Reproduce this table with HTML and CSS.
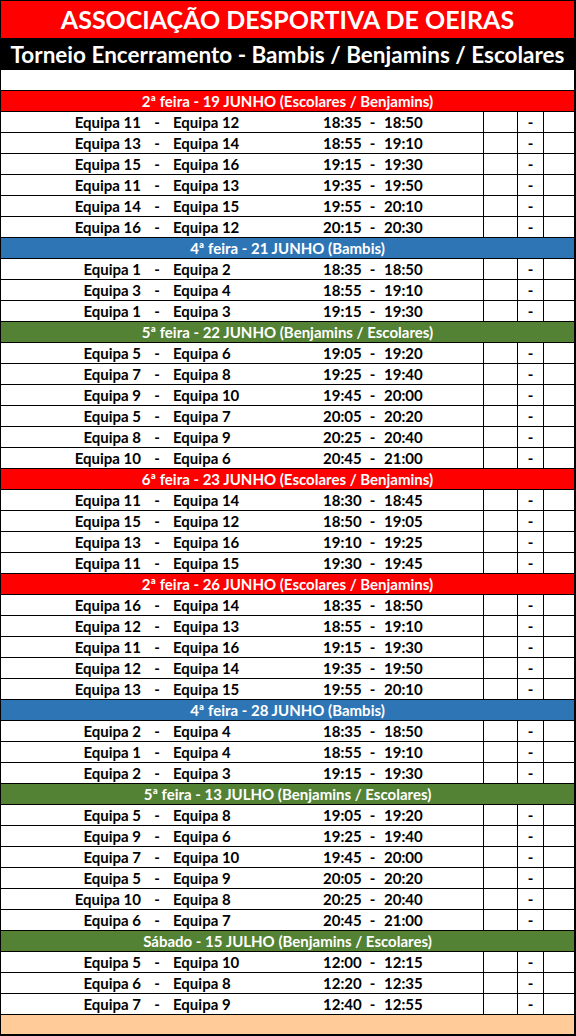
FILE: index.html
```html
<!DOCTYPE html>
<html lang="pt">
<head>
<meta charset="utf-8">
<title>Torneio Encerramento</title>
<link rel="stylesheet" href="styles.css">
</head>
<body>
<div class="sheet">
  <div class="title">ASSOCIAÇÃO DESPORTIVA DE OEIRAS</div>
  <div class="subtitle">Torneio Encerramento - Bambis / Benjamins / Escolares</div>
  <div class="blank"></div>

  <div class="day red">2ª feira - 19 JUNHO (Escolares / Benjamins)</div>
  <div class="match"><div class="game"><span class="t1">Equipa 11</span><span class="sep">-</span><span class="t2">Equipa 12</span><span class="h1">18:35</span><span class="sep2">-</span><span class="h2">18:50</span></div><div class="c"></div><div class="c">-</div><div class="c"></div></div>
  <div class="match"><div class="game"><span class="t1">Equipa 13</span><span class="sep">-</span><span class="t2">Equipa 14</span><span class="h1">18:55</span><span class="sep2">-</span><span class="h2">19:10</span></div><div class="c"></div><div class="c">-</div><div class="c"></div></div>
  <div class="match"><div class="game"><span class="t1">Equipa 15</span><span class="sep">-</span><span class="t2">Equipa 16</span><span class="h1">19:15</span><span class="sep2">-</span><span class="h2">19:30</span></div><div class="c"></div><div class="c">-</div><div class="c"></div></div>
  <div class="match"><div class="game"><span class="t1">Equipa 11</span><span class="sep">-</span><span class="t2">Equipa 13</span><span class="h1">19:35</span><span class="sep2">-</span><span class="h2">19:50</span></div><div class="c"></div><div class="c">-</div><div class="c"></div></div>
  <div class="match"><div class="game"><span class="t1">Equipa 14</span><span class="sep">-</span><span class="t2">Equipa 15</span><span class="h1">19:55</span><span class="sep2">-</span><span class="h2">20:10</span></div><div class="c"></div><div class="c">-</div><div class="c"></div></div>
  <div class="match"><div class="game"><span class="t1">Equipa 16</span><span class="sep">-</span><span class="t2">Equipa 12</span><span class="h1">20:15</span><span class="sep2">-</span><span class="h2">20:30</span></div><div class="c"></div><div class="c">-</div><div class="c"></div></div>

  <div class="day blue">4ª feira - 21 JUNHO (Bambis)</div>
  <div class="match"><div class="game"><span class="t1">Equipa 1</span><span class="sep">-</span><span class="t2">Equipa 2</span><span class="h1">18:35</span><span class="sep2">-</span><span class="h2">18:50</span></div><div class="c"></div><div class="c">-</div><div class="c"></div></div>
  <div class="match"><div class="game"><span class="t1">Equipa 3</span><span class="sep">-</span><span class="t2">Equipa 4</span><span class="h1">18:55</span><span class="sep2">-</span><span class="h2">19:10</span></div><div class="c"></div><div class="c">-</div><div class="c"></div></div>
  <div class="match"><div class="game"><span class="t1">Equipa 1</span><span class="sep">-</span><span class="t2">Equipa 3</span><span class="h1">19:15</span><span class="sep2">-</span><span class="h2">19:30</span></div><div class="c"></div><div class="c">-</div><div class="c"></div></div>

  <div class="day green">5ª feira - 22 JUNHO (Benjamins / Escolares)</div>
  <div class="match"><div class="game"><span class="t1">Equipa 5</span><span class="sep">-</span><span class="t2">Equipa 6</span><span class="h1">19:05</span><span class="sep2">-</span><span class="h2">19:20</span></div><div class="c"></div><div class="c">-</div><div class="c"></div></div>
  <div class="match"><div class="game"><span class="t1">Equipa 7</span><span class="sep">-</span><span class="t2">Equipa 8</span><span class="h1">19:25</span><span class="sep2">-</span><span class="h2">19:40</span></div><div class="c"></div><div class="c">-</div><div class="c"></div></div>
  <div class="match"><div class="game"><span class="t1">Equipa 9</span><span class="sep">-</span><span class="t2">Equipa 10</span><span class="h1">19:45</span><span class="sep2">-</span><span class="h2">20:00</span></div><div class="c"></div><div class="c">-</div><div class="c"></div></div>
  <div class="match"><div class="game"><span class="t1">Equipa 5</span><span class="sep">-</span><span class="t2">Equipa 7</span><span class="h1">20:05</span><span class="sep2">-</span><span class="h2">20:20</span></div><div class="c"></div><div class="c">-</div><div class="c"></div></div>
  <div class="match"><div class="game"><span class="t1">Equipa 8</span><span class="sep">-</span><span class="t2">Equipa 9</span><span class="h1">20:25</span><span class="sep2">-</span><span class="h2">20:40</span></div><div class="c"></div><div class="c">-</div><div class="c"></div></div>
  <div class="match"><div class="game"><span class="t1">Equipa 10</span><span class="sep">-</span><span class="t2">Equipa 6</span><span class="h1">20:45</span><span class="sep2">-</span><span class="h2">21:00</span></div><div class="c"></div><div class="c">-</div><div class="c"></div></div>

  <div class="day red">6ª feira - 23 JUNHO (Escolares / Benjamins)</div>
  <div class="match"><div class="game"><span class="t1">Equipa 11</span><span class="sep">-</span><span class="t2">Equipa 14</span><span class="h1">18:30</span><span class="sep2">-</span><span class="h2">18:45</span></div><div class="c"></div><div class="c">-</div><div class="c"></div></div>
  <div class="match"><div class="game"><span class="t1">Equipa 15</span><span class="sep">-</span><span class="t2">Equipa 12</span><span class="h1">18:50</span><span class="sep2">-</span><span class="h2">19:05</span></div><div class="c"></div><div class="c">-</div><div class="c"></div></div>
  <div class="match"><div class="game"><span class="t1">Equipa 13</span><span class="sep">-</span><span class="t2">Equipa 16</span><span class="h1">19:10</span><span class="sep2">-</span><span class="h2">19:25</span></div><div class="c"></div><div class="c">-</div><div class="c"></div></div>
  <div class="match"><div class="game"><span class="t1">Equipa 11</span><span class="sep">-</span><span class="t2">Equipa 15</span><span class="h1">19:30</span><span class="sep2">-</span><span class="h2">19:45</span></div><div class="c"></div><div class="c">-</div><div class="c"></div></div>

  <div class="day red">2ª feira - 26 JUNHO (Escolares / Benjamins)</div>
  <div class="match"><div class="game"><span class="t1">Equipa 16</span><span class="sep">-</span><span class="t2">Equipa 14</span><span class="h1">18:35</span><span class="sep2">-</span><span class="h2">18:50</span></div><div class="c"></div><div class="c">-</div><div class="c"></div></div>
  <div class="match"><div class="game"><span class="t1">Equipa 12</span><span class="sep">-</span><span class="t2">Equipa 13</span><span class="h1">18:55</span><span class="sep2">-</span><span class="h2">19:10</span></div><div class="c"></div><div class="c">-</div><div class="c"></div></div>
  <div class="match"><div class="game"><span class="t1">Equipa 11</span><span class="sep">-</span><span class="t2">Equipa 16</span><span class="h1">19:15</span><span class="sep2">-</span><span class="h2">19:30</span></div><div class="c"></div><div class="c">-</div><div class="c"></div></div>
  <div class="match"><div class="game"><span class="t1">Equipa 12</span><span class="sep">-</span><span class="t2">Equipa 14</span><span class="h1">19:35</span><span class="sep2">-</span><span class="h2">19:50</span></div><div class="c"></div><div class="c">-</div><div class="c"></div></div>
  <div class="match"><div class="game"><span class="t1">Equipa 13</span><span class="sep">-</span><span class="t2">Equipa 15</span><span class="h1">19:55</span><span class="sep2">-</span><span class="h2">20:10</span></div><div class="c"></div><div class="c">-</div><div class="c"></div></div>

  <div class="day blue">4ª feira - 28 JUNHO (Bambis)</div>
  <div class="match"><div class="game"><span class="t1">Equipa 2</span><span class="sep">-</span><span class="t2">Equipa 4</span><span class="h1">18:35</span><span class="sep2">-</span><span class="h2">18:50</span></div><div class="c"></div><div class="c">-</div><div class="c"></div></div>
  <div class="match"><div class="game"><span class="t1">Equipa 1</span><span class="sep">-</span><span class="t2">Equipa 4</span><span class="h1">18:55</span><span class="sep2">-</span><span class="h2">19:10</span></div><div class="c"></div><div class="c">-</div><div class="c"></div></div>
  <div class="match"><div class="game"><span class="t1">Equipa 2</span><span class="sep">-</span><span class="t2">Equipa 3</span><span class="h1">19:15</span><span class="sep2">-</span><span class="h2">19:30</span></div><div class="c"></div><div class="c">-</div><div class="c"></div></div>

  <div class="day green">5ª feira - 13 JULHO (Benjamins / Escolares)</div>
  <div class="match"><div class="game"><span class="t1">Equipa 5</span><span class="sep">-</span><span class="t2">Equipa 8</span><span class="h1">19:05</span><span class="sep2">-</span><span class="h2">19:20</span></div><div class="c"></div><div class="c">-</div><div class="c"></div></div>
  <div class="match"><div class="game"><span class="t1">Equipa 9</span><span class="sep">-</span><span class="t2">Equipa 6</span><span class="h1">19:25</span><span class="sep2">-</span><span class="h2">19:40</span></div><div class="c"></div><div class="c">-</div><div class="c"></div></div>
  <div class="match"><div class="game"><span class="t1">Equipa 7</span><span class="sep">-</span><span class="t2">Equipa 10</span><span class="h1">19:45</span><span class="sep2">-</span><span class="h2">20:00</span></div><div class="c"></div><div class="c">-</div><div class="c"></div></div>
  <div class="match"><div class="game"><span class="t1">Equipa 5</span><span class="sep">-</span><span class="t2">Equipa 9</span><span class="h1">20:05</span><span class="sep2">-</span><span class="h2">20:20</span></div><div class="c"></div><div class="c">-</div><div class="c"></div></div>
  <div class="match"><div class="game"><span class="t1">Equipa 10</span><span class="sep">-</span><span class="t2">Equipa 8</span><span class="h1">20:25</span><span class="sep2">-</span><span class="h2">20:40</span></div><div class="c"></div><div class="c">-</div><div class="c"></div></div>
  <div class="match"><div class="game"><span class="t1">Equipa 6</span><span class="sep">-</span><span class="t2">Equipa 7</span><span class="h1">20:45</span><span class="sep2">-</span><span class="h2">21:00</span></div><div class="c"></div><div class="c">-</div><div class="c"></div></div>

  <div class="day green">Sábado - 15 JULHO (Benjamins / Escolares)</div>
  <div class="match"><div class="game"><span class="t1">Equipa 5</span><span class="sep">-</span><span class="t2">Equipa 10</span><span class="h1">12:00</span><span class="sep2">-</span><span class="h2">12:15</span></div><div class="c"></div><div class="c">-</div><div class="c"></div></div>
  <div class="match"><div class="game"><span class="t1">Equipa 6</span><span class="sep">-</span><span class="t2">Equipa 8</span><span class="h1">12:20</span><span class="sep2">-</span><span class="h2">12:35</span></div><div class="c"></div><div class="c">-</div><div class="c"></div></div>
  <div class="match"><div class="game"><span class="t1">Equipa 7</span><span class="sep">-</span><span class="t2">Equipa 9</span><span class="h1">12:40</span><span class="sep2">-</span><span class="h2">12:55</span></div><div class="c"></div><div class="c">-</div><div class="c"></div></div>

  <div class="foot"></div>
</div>
</body>
</html>
```

FILE: styles.css
```css
html, body {
  margin: 0;
  padding: 0;
  background: #ffffff;
}

.sheet {
  width: 576px;
  box-sizing: border-box;
  border-top: 1px solid #000;
  border-left: 1px solid #000;
  border-right: 2px solid #000;
  border-bottom: 2px solid #000;
  display: flex;
  flex-direction: column;
  font-family: Lato, "Liberation Sans", sans-serif;
  color: #000;
}

.title {
  height: 37px;
  background: #ff0000;
  color: #fff;
  font-weight: 700;
  font-size: 25px;
  line-height: 37px;
  text-align: center;
}

.subtitle {
  height: 32px;
  background: #000;
  color: #fff;
  font-weight: 700;
  font-size: 22.5px;
  line-height: 33px;
  text-align: center;
  white-space: nowrap;
}

.blank {
  height: 20px;
  background: #fff;
}

.day {
  height: 20px;
  border-top: 1px solid #000;
  color: #fff;
  font-weight: 700;
  font-size: 15px;
  line-height: 20px;
  text-align: center;
}

.red { background: #ff0000; }
.blue { background: #2e75b6; }
.green { background: #548235; }

.match {
  height: 20px;
  border-top: 1px solid #000;
  display: grid;
  grid-template-columns: 482px 34px 26px 31px;
  font-weight: 700;
  font-size: 15px;
  line-height: 21px;
  background: #fff;
}

.game {
  display: grid;
  grid-template-columns: 140px 32px 150px 38px 23px 1fr;
  white-space: nowrap;
}

.t1 { text-align: right; }
.sep { text-align: center; }
.t2 { text-align: left; }
.h1 { text-align: left; }
.sep2 { text-align: center; }
.h2 { text-align: left; }

.c {
  border-left: 1px solid #000;
  box-sizing: border-box;
  text-align: center;
}

.foot {
  height: 19px;
  border-top: 1px solid #000;
  background: #ffcc99;
}
```
